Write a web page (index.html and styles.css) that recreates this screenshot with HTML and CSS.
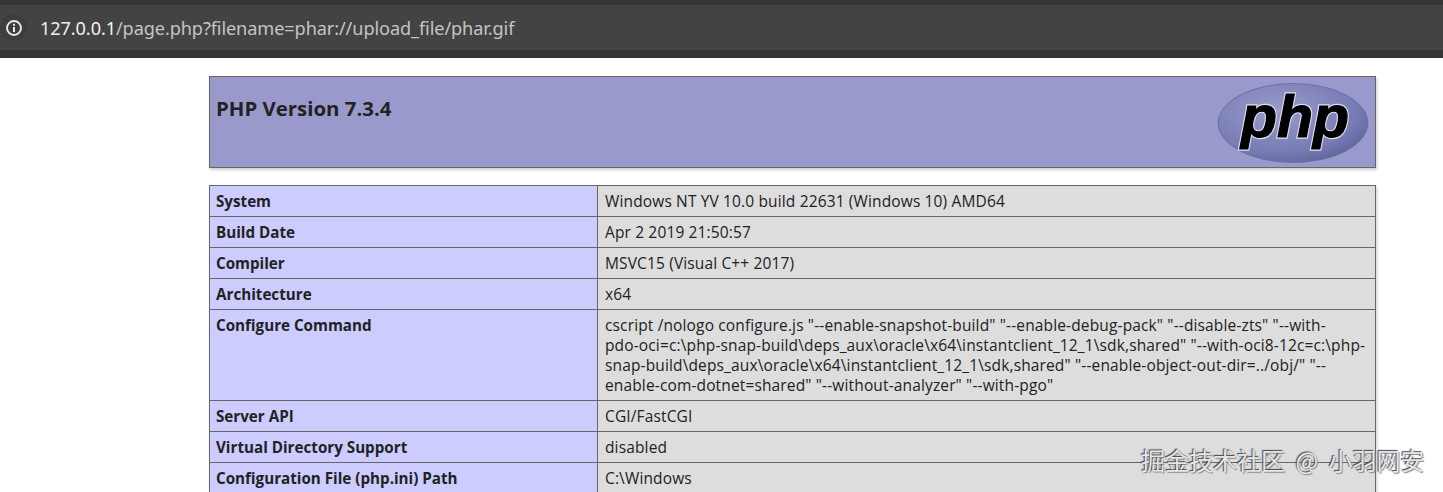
FILE: index.html
```html
<!DOCTYPE html>
<html lang="en">
<head>
    <meta charset="UTF-8">
    <meta name="viewport" content="width=device-width, initial-scale=1.0">
    <title>phpinfo()</title>
    <link rel="stylesheet" href="styles.css">
</head>
<body>
    <div class="address-bar">
        <div class="address-inner">
            <span class="info-badge">
                <svg width="18" height="18" viewBox="0 0 18 18">
                    <circle cx="9" cy="9" r="7" fill="none" stroke="#e8e8e8" stroke-width="1.9"/>
                    <rect x="8" y="8" width="2" height="5" fill="#e8e8e8"/>
                    <rect x="8" y="4.8" width="2" height="2" fill="#e8e8e8"/>
                </svg>
            </span>
            <span class="url"><span class="host">127.0.0.1</span>/page.php?filename=phar://upload_file/phar.gif</span>
        </div>
    </div>

    <div class="center">
        <div class="php-header">
            <h1>PHP Version 7.3.4</h1>
            <svg class="php-logo" width="152" height="82" viewBox="0 0 152 82">
                <defs>
                    <radialGradient id="logo-fill" cx="0.4" cy="0.35" r="0.75">
                        <stop offset="0" stop-color="#9a9cca"/>
                        <stop offset="0.7" stop-color="#777bb4"/>
                        <stop offset="1" stop-color="#5a5d95"/>
                    </radialGradient>
                </defs>
                <ellipse cx="76" cy="41" rx="75" ry="39.5" fill="url(#logo-fill)" stroke="#6c6fa8" stroke-width="1"/>
                <text class="logo-text logo-halo" x="24" y="55" textLength="108" lengthAdjust="spacingAndGlyphs">php</text>
                <text class="logo-text" x="24" y="55" textLength="108" lengthAdjust="spacingAndGlyphs">php</text>
            </svg>
        </div>

        <table class="info-table">
            <tr><td class="key">System</td><td class="val">Windows NT YV 10.0 build 22631 (Windows 10) AMD64</td></tr>
            <tr><td class="key">Build Date</td><td class="val">Apr 2 2019 21:50:57</td></tr>
            <tr><td class="key">Compiler</td><td class="val">MSVC15 (Visual C++ 2017)</td></tr>
            <tr><td class="key">Architecture</td><td class="val">x64</td></tr>
            <tr>
                <td class="key">Configure Command</td>
                <td class="val">cscript /nologo configure.js "--enable-snapshot-build" "--enable-debug-pack" "--disable-zts" "--with-<br>pdo-oci=c:\php-snap-build\deps_aux\oracle\x64\instantclient_12_1\sdk,shared" "--with-oci8-12c=c:\php-<br>snap-build\deps_aux\oracle\x64\instantclient_12_1\sdk,shared" "--enable-object-out-dir=../obj/" "--<br>enable-com-dotnet=shared" "--without-analyzer" "--with-pgo"</td>
            </tr>
            <tr><td class="key">Server API</td><td class="val">CGI/FastCGI</td></tr>
            <tr><td class="key">Virtual Directory Support</td><td class="val">disabled</td></tr>
            <tr><td class="key">Configuration File (php.ini) Path</td><td class="val">C:\Windows</td></tr>
        </table>
    </div>

    <div class="watermark">掘金技术社区 @ 小羽网安</div>
</body>
</html>
```

FILE: styles.css
```css
html, body {
    margin: 0;
    height: 492px;
    overflow: hidden;
}

body {
    background-color: #fff;
    font-family: "Open Sans", "Noto Sans", sans-serif;
    color: #222;
}

.address-bar {
    height: 58px;
    box-sizing: border-box;
    padding-top: 5px;
    background-color: #363636;
}

.address-inner {
    height: 45px;
    display: flex;
    align-items: center;
    background-color: #434343;
}

.info-badge {
    width: 27px;
    height: 27px;
    margin-right: 13px;
    display: flex;
    align-items: center;
    justify-content: center;
    border-radius: 50%;
    background-color: #3d3d3d;
}

.url {
    font-family: "Noto Sans", "Open Sans", sans-serif;
    font-size: 18.15px;
    color: #c4c4c4;
    letter-spacing: -0.1px;
}

.host {
    color: #f0f0f0;
}

.center {
    width: 1167px;
    margin: 18px 0 0 209px;
}

.php-header {
    height: 90px;
    display: flex;
    justify-content: space-between;
    background-color: #9999cc;
    border: 1px solid #666;
    box-shadow: 1px 2px 3px #ccc;
}

h1 {
    margin: 18px 0 0 6px;
    font-size: 20.4px;
    line-height: 27px;
    font-weight: 700;
    color: #222;
}

.php-logo {
    margin: 5px 6px 0 0;
}

.logo-text {
    font-family: "Liberation Sans", sans-serif;
    font-size: 60px;
    font-weight: 700;
    font-style: italic;
    fill: #000;
    stroke: #000;
    stroke-width: 1.2px;
}

.logo-halo {
    fill: #dfe0ef;
    stroke: #dfe0ef;
    stroke-width: 3.4px;
}

.info-table {
    width: 1167px;
    margin-top: 17px;
    border-collapse: collapse;
    table-layout: fixed;
    font-size: 15.2px;
    line-height: 20px;
    box-shadow: 1px 2px 3px #ccc;
}

.info-table td {
    border: 1px solid #666;
    padding: 5px 6px 5px 6px;
    vertical-align: baseline;
}

.key {
    width: 375px;
    background-color: #ccccff;
    font-weight: 700;
    color: #222;
}

.info-table .val {
    padding-left: 7px;
    background-color: #dddddd;
    color: #222;
    font-size: 15.5px;
    letter-spacing: 0.14px;
}

.watermark {
    position: absolute;
    left: 1141px;
    top: 445px;
    font-family: "Noto Sans CJK SC", sans-serif;
    font-size: 24px;
    line-height: 30px;
    word-spacing: 5px;
    white-space: nowrap;
    color: #e6e6e6;
    text-shadow: -1px -1px 1px #444, 1px 1px 1px #888;
}
```
